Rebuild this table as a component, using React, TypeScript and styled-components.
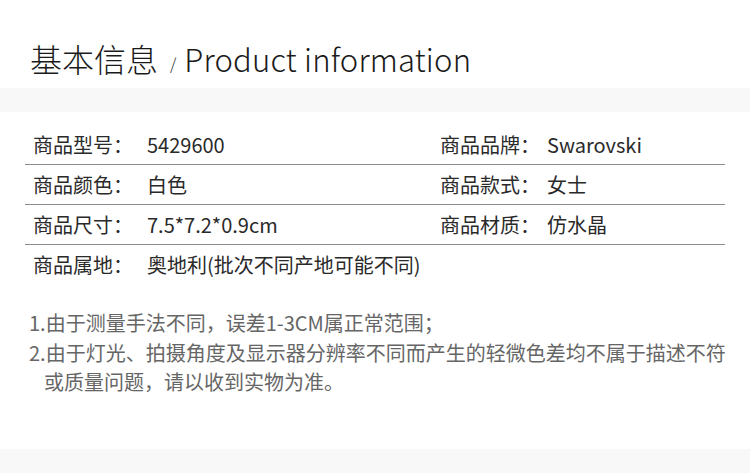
import React from "react";
import styled, { createGlobalStyle } from "styled-components";

const GlobalStyle = createGlobalStyle`
  body {
    margin: 0;
    background: #ffffff;
    font-family: "Noto Sans CJK SC", "Noto Sans", sans-serif;
  }
`;

type Spec = { label: string; value: string };

const specs: Spec[][] = [
  [
    { label: "商品型号：", value: "5429600" },
    { label: "商品品牌：", value: "Swarovski" },
  ],
  [
    { label: "商品颜色：", value: "白色" },
    { label: "商品款式：", value: "女士" },
  ],
  [
    { label: "商品尺寸：", value: "7.5*7.2*0.9cm" },
    { label: "商品材质：", value: "仿水晶" },
  ],
];

const notes = [
  "1.由于测量手法不同，误差1-3CM属正常范围；",
  "2.由于灯光、拍摄角度及显示器分辨率不同而产生的轻微色差均不属于描述不符或质量问题，请以收到实物为准。",
];

const App: React.FC = () => {
  return (
    <Page>
      <GlobalStyle />
      <Header>
        <TitleCn>基本信息</TitleCn>
        <Slash>/</Slash>
        <TitleEn>Product information</TitleEn>
      </Header>
      <Band />
      <Table>
        {specs.map((row, i) => (
          <Row key={i} bordered>
            <Cell>
              <Label wide>{row[0].label}</Label>
              <Value>{row[0].value}</Value>
            </Cell>
            <Cell>
              <Label>{row[1].label}</Label>
              <Value>{row[1].value}</Value>
            </Cell>
          </Row>
        ))}
        <Row>
          <Cell>
            <Label wide>商品属地：</Label>
            <Value>奥地利(批次不同产地可能不同)</Value>
          </Cell>
        </Row>
      </Table>
      <Notes>
        {notes.map((n) => (
          <Note key={n}>{n}</Note>
        ))}
      </Notes>
      <Band />
    </Page>
  );
};
export default App;

const Page = styled.div`
  width: 750px;
  height: 473px;
  overflow: hidden;
  display: flex;
  flex-direction: column;
`;

const Header = styled.div`
  height: 88px;
  box-sizing: border-box;
  padding: 36px 0 0 30px;
  display: flex;
  align-items: baseline;
  color: #1a1a1a;
`;

const TitleCn = styled.span`
  font-size: 32px;
  line-height: 44px;
  font-weight: 300;
`;

const Slash = styled.span`
  font-size: 16px;
  font-weight: 300;
  margin: 0 8px 0 12px;
  position: relative;
  top: -2px;
`;

const TitleEn = styled.span`
  font-size: 31px;
  font-weight: 300;
  letter-spacing: 0.2px;
`;

const Band = styled.div`
  height: 24px;
  flex-shrink: 0;
  background: #f8f8f8;
`;

const Table = styled.div`
  margin: 13px 25px 0;
  width: 700px;
`;

const Row = styled.div<{ bordered?: boolean }>`
  display: grid;
  grid-template-columns: 407px 1fr;
  height: 40px;
  align-items: center;
  border-bottom: ${(p) => (p.bordered ? "1px solid #8c8c8c" : "none")};
  box-sizing: border-box;
`;

const Cell = styled.div`
  display: flex;
  align-items: center;
  padding-left: 8px;
  white-space: nowrap;
  font-size: 20px;
  color: #2a2a2a;
`;

const Label = styled.span<{ wide?: boolean }>`
  width: ${(p) => (p.wide ? "114px" : "107px")};
  flex-shrink: 0;
`;

const Value = styled.span``;

const Notes = styled.div`
  margin: 23px 0 0 29px;
  width: 700px;
  height: 142px;
  color: #666;
  font-size: 20px;
`;

const Note = styled.p`
  margin: 0 0 1px;
  line-height: 29px;
  padding-left: 15px;
  text-indent: -15px;
`;
